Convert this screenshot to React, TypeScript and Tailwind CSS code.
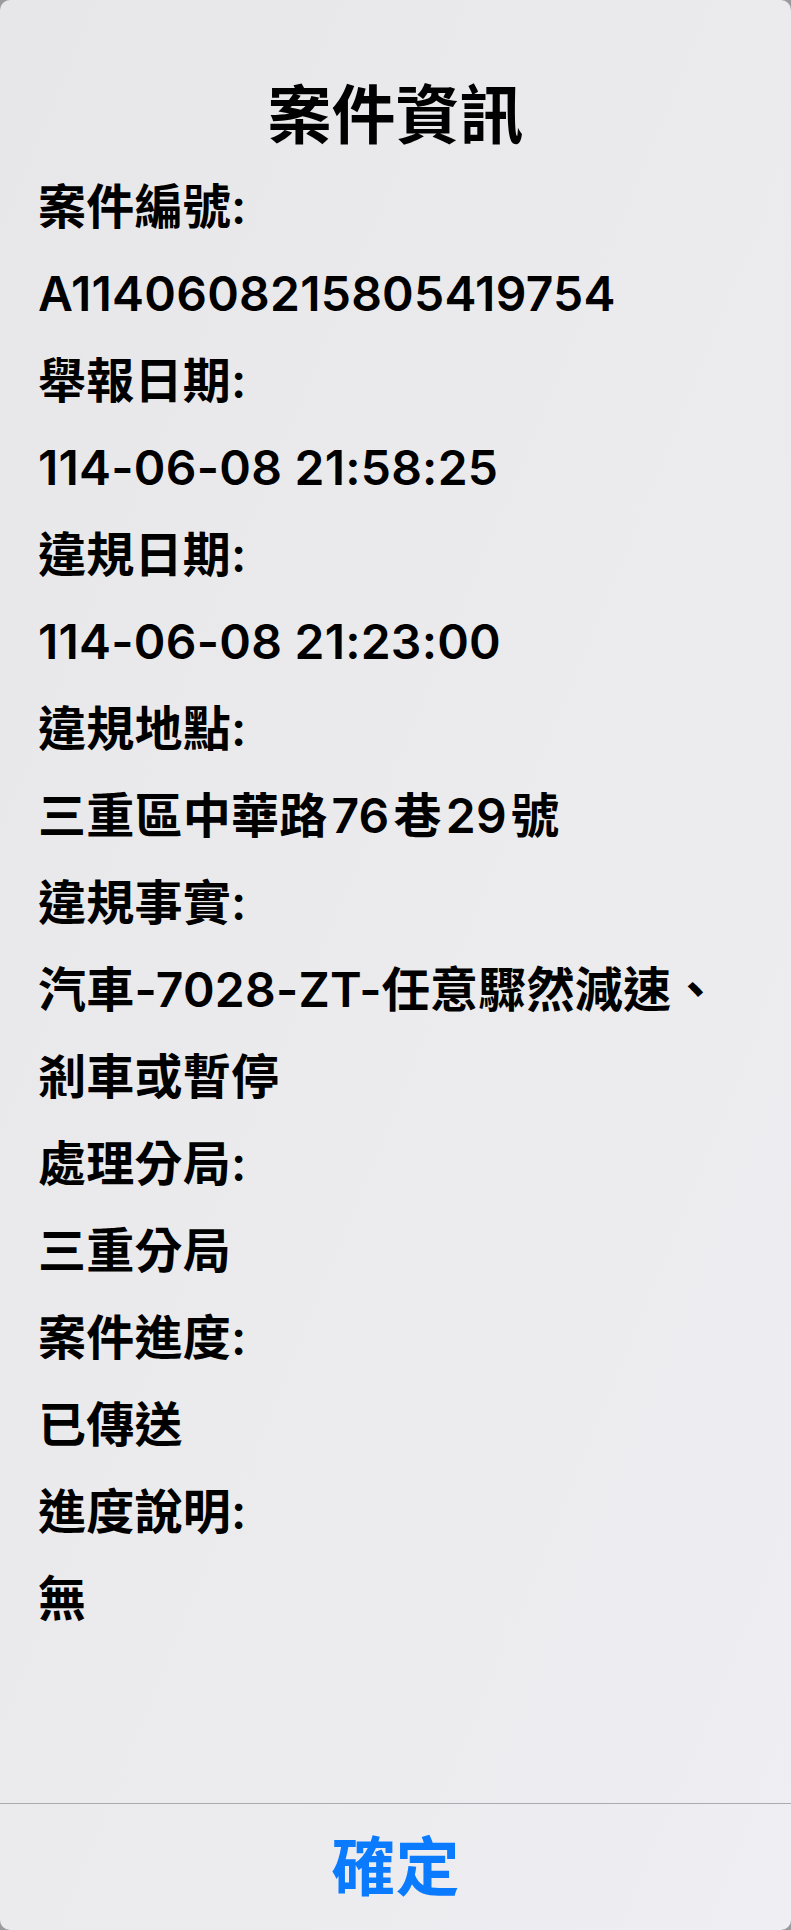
import React from 'react'

// ─── Case data ────────────────────────────────────────────────────────────────

// little gap iOS puts between CJK and latin runs
const Num = ({ children }: { children: React.ReactNode }) => (
  <span className="px-[4px]">{children}</span>
)

const FIELDS: { label: string; value: React.ReactNode }[] = [
  { label: '案件編號:', value: 'A114060821580541975 4'.replace(' ', '') },
  { label: '舉報日期:', value: '114-06-08 21:58:25' },
  { label: '違規日期:', value: '114-06-08 21:23:00' },
  {
    label: '違規地點:',
    value: (
      <>
        三重區中華路<Num>76</Num>巷<Num>29</Num>號
      </>
    ),
  },
  {
    label: '違規事實:',
    value: (
      <>
        汽車-7028-ZT-任意驟然減速、
        <br />
        剎車或暫停
      </>
    ),
  },
  { label: '處理分局:', value: '三重分局' },
  { label: '案件進度:', value: '已傳送' },
  { label: '進度說明:', value: '無' },
]

const FONT = "font-['Inter','Noto_Sans_CJK_TC',sans-serif]"

// ─── Alert ────────────────────────────────────────────────────────────────────

export default function App() {
  return (
    <div className={`w-[791px] h-[1930px] bg-[#9a9a9f] ${FONT}`}>
      <div className="flex flex-col h-full rounded-[10px] overflow-hidden bg-gradient-to-br from-[#e7e7e9] via-[#ebebed] to-[#eeeef3]">

        {/* Body */}
        <div className="flex-1 px-[38px] pt-[75px] text-black">
          <h1 className="text-center text-[64px] leading-[80px] font-bold">案件資訊</h1>
          <div className="mt-[8px] text-[48px] leading-[87px] font-semibold tracking-[0.005em]">
            {FIELDS.map(f => (
              <React.Fragment key={f.label}>
                <p>{f.label}</p>
                <p>{f.value}</p>
              </React.Fragment>
            ))}
          </div>
        </div>

        {/* Action */}
        <div className="h-px bg-[#aaaaaf]" />
        <button className="h-[126px] w-full flex items-center justify-center text-[64px] font-semibold text-[#0a7bff]">
          確定
        </button>
      </div>
    </div>
  )
}
